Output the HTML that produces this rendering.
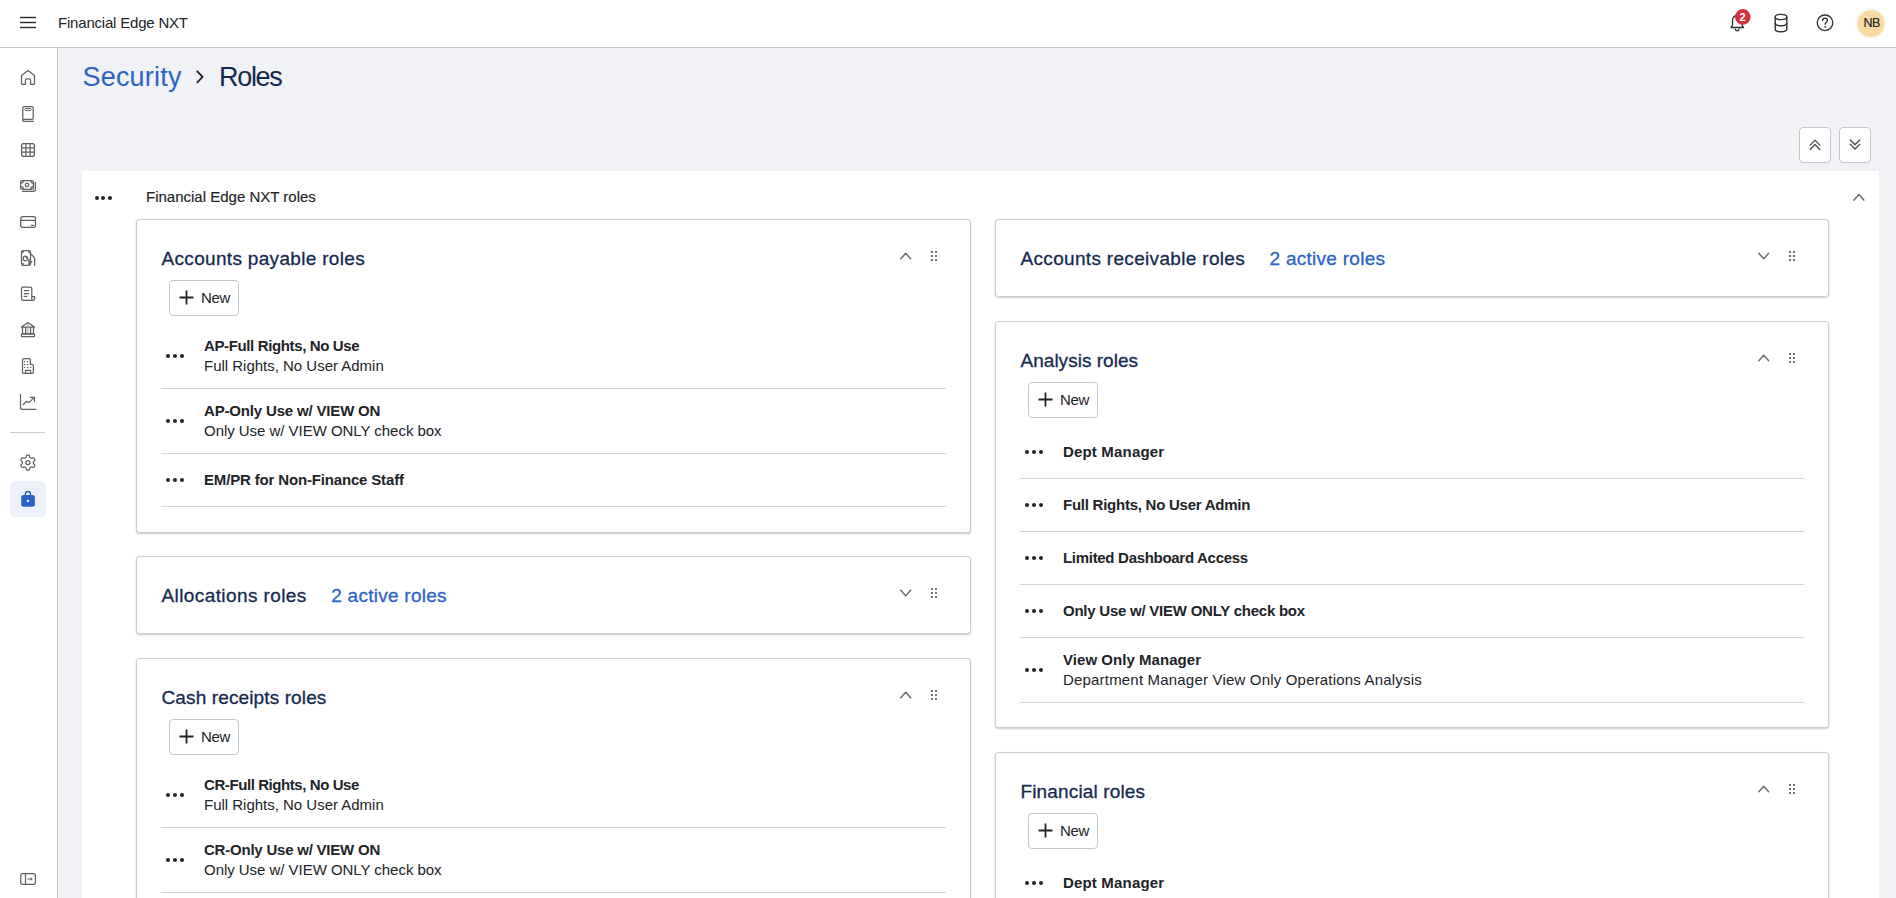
<!DOCTYPE html>
<html><head><meta charset="utf-8">
<style>
*{box-sizing:border-box;margin:0;padding:0}
html,body{width:1896px;height:898px;overflow:hidden}
body{font-family:"Liberation Sans",sans-serif;background:#f0f2f5;color:#212327;position:relative}
.abs{position:absolute}
svg.abs{pointer-events:none}
#hdr{left:0;top:0;width:1896px;height:48px;background:#fff;border-bottom:1px solid #c1c5cc}
#nav{left:0;top:48px;width:58px;height:850px;background:#fff;border-right:1px solid #c1c5cc}
.t{position:absolute;white-space:nowrap;line-height:1}
#sect{left:82px;top:171px;width:1797px;height:727px;background:#fff}
.ecb{width:32px;height:36px;border:1px solid #c2c6cd;border-radius:4px;background:#fff}
.card{position:absolute;background:#fff;border:1px solid #c9ccd2;border-radius:3.5px;box-shadow:0 1px 2px rgba(0,0,0,.22)}
.ttl{color:#152a4e;-webkit-text-stroke:0.3px #152a4e}
.cnt{-webkit-text-stroke:0.3px #2b63c4}
.cnt{color:#2b63c4;margin-left:24.5px}
.btn{position:absolute;width:70px;height:36px;border:1px solid #c2c6cc;border-radius:4px;background:#fff}
.dots{left:0;top:0}
.dots i{position:absolute;border-radius:50%}
.nm{font-weight:bold;color:#212327}
.ds{color:#212327}

</style></head><body>
<div class="abs" id="hdr"></div><div class="abs" id="nav"></div><div class="t " style="left:58.0px;top:15.30px;font-size:15px;color:#212327;letter-spacing:-0.2px">Financial Edge NXT</div><div class="abs" style="left:10px;top:431.8px;width:35px;height:1px;background:#c9ccd1"></div><div class="abs" style="left:10px;top:481px;width:36px;height:36px;border-radius:5px;background:#ecf0f9"></div><div class="t " style="left:82.5px;top:64.14px;font-size:27px;color:#2b64c6;letter-spacing:0.2px">Security</div><div class="t " style="left:219.0px;top:64.14px;font-size:27px;color:#142a4d;letter-spacing:-1.3px">Roles</div><div class="abs ecb" style="left:1799px;top:127px"></div><div class="abs ecb" style="left:1839px;top:127px"></div><div class="abs" id="sect"></div><div class="abs dots"><i style="left:94.50px;top:195.60px;width:4.0px;height:4.0px;background:#212327"></i><i style="left:101.40px;top:195.60px;width:4.0px;height:4.0px;background:#212327"></i><i style="left:108.30px;top:195.60px;width:4.0px;height:4.0px;background:#212327"></i></div><div class="t " style="left:146.0px;top:188.90px;font-size:15px;color:#212327;-webkit-text-stroke:0.15px #212327">Financial Edge NXT roles</div><div class="card" style="left:136px;top:219px;width:835px;height:314px"></div><div class="t ttl" style="left:161.5px;top:249.11px;font-size:19px;"><span style="letter-spacing:0.319px">Accounts payable roles</span></div><div class="btn" style="left:169px;top:280px"></div><div class="t " style="left:201.0px;top:289.80px;font-size:15px;color:#212327;letter-spacing:-0.3px">New</div><div class="abs" style="left:161px;top:388px;width:785px;height:1px;background:#d2d5da"></div><div class="abs dots"><i style="left:166.00px;top:353.90px;width:4.2px;height:4.2px;background:#212327"></i><i style="left:172.80px;top:353.90px;width:4.2px;height:4.2px;background:#212327"></i><i style="left:179.60px;top:353.90px;width:4.2px;height:4.2px;background:#212327"></i></div><div class="t nm" style="left:204.0px;top:337.60px;font-size:15px;letter-spacing:-0.371px">AP-Full Rights, No Use</div><div class="t ds" style="left:204.0px;top:357.70px;font-size:15px;letter-spacing:-0.012px">Full Rights, No User Admin</div><div class="abs" style="left:161px;top:453px;width:785px;height:1px;background:#d2d5da"></div><div class="abs dots"><i style="left:166.00px;top:418.90px;width:4.2px;height:4.2px;background:#212327"></i><i style="left:172.80px;top:418.90px;width:4.2px;height:4.2px;background:#212327"></i><i style="left:179.60px;top:418.90px;width:4.2px;height:4.2px;background:#212327"></i></div><div class="t nm" style="left:204.0px;top:402.60px;font-size:15px;letter-spacing:-0.171px">AP-Only Use w/ VIEW ON</div><div class="t ds" style="left:204.0px;top:422.70px;font-size:15px;letter-spacing:-0.037px">Only Use w/ VIEW ONLY check box</div><div class="abs" style="left:161px;top:506px;width:785px;height:1px;background:#d2d5da"></div><div class="abs dots"><i style="left:166.00px;top:477.70px;width:4.2px;height:4.2px;background:#212327"></i><i style="left:172.80px;top:477.70px;width:4.2px;height:4.2px;background:#212327"></i><i style="left:179.60px;top:477.70px;width:4.2px;height:4.2px;background:#212327"></i></div><div class="t nm" style="left:204.0px;top:472.30px;font-size:15px;letter-spacing:-0.162px">EM/PR for Non-Finance Staff</div><div class="card" style="left:136px;top:556px;width:835px;height:78px"></div><div class="t ttl" style="left:161.5px;top:586.11px;font-size:19px;"><span style="letter-spacing:0.400px">Allocations roles</span><span class="cnt" style="letter-spacing:0.27px">2 active roles</span></div><div class="card" style="left:136px;top:658px;width:835px;height:401px"></div><div class="t ttl" style="left:161.5px;top:688.11px;font-size:19px;"><span style="letter-spacing:0.122px">Cash receipts roles</span></div><div class="btn" style="left:169px;top:719px"></div><div class="t " style="left:201.0px;top:728.80px;font-size:15px;color:#212327;letter-spacing:-0.3px">New</div><div class="abs" style="left:161px;top:827px;width:785px;height:1px;background:#d2d5da"></div><div class="abs dots"><i style="left:166.00px;top:792.90px;width:4.2px;height:4.2px;background:#212327"></i><i style="left:172.80px;top:792.90px;width:4.2px;height:4.2px;background:#212327"></i><i style="left:179.60px;top:792.90px;width:4.2px;height:4.2px;background:#212327"></i></div><div class="t nm" style="left:204.0px;top:776.60px;font-size:15px;letter-spacing:-0.419px">CR-Full Rights, No Use</div><div class="t ds" style="left:204.0px;top:796.70px;font-size:15px;letter-spacing:-0.012px">Full Rights, No User Admin</div><div class="abs" style="left:161px;top:892px;width:785px;height:1px;background:#d2d5da"></div><div class="abs dots"><i style="left:166.00px;top:857.90px;width:4.2px;height:4.2px;background:#212327"></i><i style="left:172.80px;top:857.90px;width:4.2px;height:4.2px;background:#212327"></i><i style="left:179.60px;top:857.90px;width:4.2px;height:4.2px;background:#212327"></i></div><div class="t nm" style="left:204.0px;top:841.60px;font-size:15px;letter-spacing:-0.219px">CR-Only Use w/ VIEW ON</div><div class="t ds" style="left:204.0px;top:861.70px;font-size:15px;letter-spacing:-0.037px">Only Use w/ VIEW ONLY check box</div><div class="abs" style="left:161px;top:945px;width:785px;height:1px;background:#d2d5da"></div><div class="abs dots"><i style="left:166.00px;top:916.70px;width:4.2px;height:4.2px;background:#212327"></i><i style="left:172.80px;top:916.70px;width:4.2px;height:4.2px;background:#212327"></i><i style="left:179.60px;top:916.70px;width:4.2px;height:4.2px;background:#212327"></i></div><div class="t nm" style="left:204.0px;top:911.30px;font-size:15px;letter-spacing:-0.250px">CR-something</div><div class="card" style="left:995px;top:219px;width:834px;height:78px"></div><div class="t ttl" style="left:1020.5px;top:249.11px;font-size:19px;"><span style="letter-spacing:0.321px">Accounts receivable roles</span><span class="cnt" style="letter-spacing:0.27px">2 active roles</span></div><div class="card" style="left:995px;top:321px;width:834px;height:407px"></div><div class="t ttl" style="left:1020.5px;top:351.11px;font-size:19px;"><span style="letter-spacing:0.023px">Analysis roles</span></div><div class="btn" style="left:1028px;top:382px"></div><div class="t " style="left:1060.0px;top:391.80px;font-size:15px;color:#212327;letter-spacing:-0.3px">New</div><div class="abs" style="left:1020px;top:478px;width:784px;height:1px;background:#d2d5da"></div><div class="abs dots"><i style="left:1025.00px;top:449.70px;width:4.2px;height:4.2px;background:#212327"></i><i style="left:1031.80px;top:449.70px;width:4.2px;height:4.2px;background:#212327"></i><i style="left:1038.60px;top:449.70px;width:4.2px;height:4.2px;background:#212327"></i></div><div class="t nm" style="left:1063.0px;top:444.30px;font-size:15px;letter-spacing:0.173px">Dept Manager</div><div class="abs" style="left:1020px;top:531px;width:784px;height:1px;background:#d2d5da"></div><div class="abs dots"><i style="left:1025.00px;top:502.70px;width:4.2px;height:4.2px;background:#212327"></i><i style="left:1031.80px;top:502.70px;width:4.2px;height:4.2px;background:#212327"></i><i style="left:1038.60px;top:502.70px;width:4.2px;height:4.2px;background:#212327"></i></div><div class="t nm" style="left:1063.0px;top:497.30px;font-size:15px;letter-spacing:-0.248px">Full Rights, No User Admin</div><div class="abs" style="left:1020px;top:584px;width:784px;height:1px;background:#d2d5da"></div><div class="abs dots"><i style="left:1025.00px;top:555.70px;width:4.2px;height:4.2px;background:#212327"></i><i style="left:1031.80px;top:555.70px;width:4.2px;height:4.2px;background:#212327"></i><i style="left:1038.60px;top:555.70px;width:4.2px;height:4.2px;background:#212327"></i></div><div class="t nm" style="left:1063.0px;top:550.30px;font-size:15px;letter-spacing:-0.300px">Limited Dashboard Access</div><div class="abs" style="left:1020px;top:637px;width:784px;height:1px;background:#d2d5da"></div><div class="abs dots"><i style="left:1025.00px;top:608.70px;width:4.2px;height:4.2px;background:#212327"></i><i style="left:1031.80px;top:608.70px;width:4.2px;height:4.2px;background:#212327"></i><i style="left:1038.60px;top:608.70px;width:4.2px;height:4.2px;background:#212327"></i></div><div class="t nm" style="left:1063.0px;top:603.30px;font-size:15px;letter-spacing:-0.237px">Only Use w/ VIEW ONLY check box</div><div class="abs" style="left:1020px;top:702px;width:784px;height:1px;background:#d2d5da"></div><div class="abs dots"><i style="left:1025.00px;top:667.90px;width:4.2px;height:4.2px;background:#212327"></i><i style="left:1031.80px;top:667.90px;width:4.2px;height:4.2px;background:#212327"></i><i style="left:1038.60px;top:667.90px;width:4.2px;height:4.2px;background:#212327"></i></div><div class="t nm" style="left:1063.0px;top:651.60px;font-size:15px;letter-spacing:0.044px">View Only Manager</div><div class="t ds" style="left:1063.0px;top:671.70px;font-size:15px;letter-spacing:0.187px">Department Manager View Only Operations Analysis</div><div class="card" style="left:995px;top:752px;width:834px;height:401px"></div><div class="t ttl" style="left:1020.5px;top:782.11px;font-size:19px;"><span style="letter-spacing:0.143px">Financial roles</span></div><div class="btn" style="left:1028px;top:813px"></div><div class="t " style="left:1060.0px;top:822.80px;font-size:15px;color:#212327;letter-spacing:-0.3px">New</div><div class="abs" style="left:1020px;top:909px;width:784px;height:1px;background:#d2d5da"></div><div class="abs dots"><i style="left:1025.00px;top:880.70px;width:4.2px;height:4.2px;background:#212327"></i><i style="left:1031.80px;top:880.70px;width:4.2px;height:4.2px;background:#212327"></i><i style="left:1038.60px;top:880.70px;width:4.2px;height:4.2px;background:#212327"></i></div><div class="t nm" style="left:1063.0px;top:875.30px;font-size:15px;letter-spacing:0.173px">Dept Manager</div><div class="abs" style="left:1020px;top:962px;width:784px;height:1px;background:#d2d5da"></div><div class="abs dots"><i style="left:1025.00px;top:933.70px;width:4.2px;height:4.2px;background:#212327"></i><i style="left:1031.80px;top:933.70px;width:4.2px;height:4.2px;background:#212327"></i><i style="left:1038.60px;top:933.70px;width:4.2px;height:4.2px;background:#212327"></i></div><div class="t nm" style="left:1063.0px;top:928.30px;font-size:15px;letter-spacing:-0.248px">Full Rights, No User Admin</div>
<svg class="abs" style="left:0;top:0" width="1896" height="898" viewBox="0 0 1896 898">
<rect x="20" y="16.80" width="16" height="1.4" fill="#26282c"/><rect x="20" y="21.80" width="16" height="1.4" fill="#26282c"/><rect x="20" y="26.80" width="16" height="1.4" fill="#26282c"/><path d="M1731 27.5 L1743.5 27.5 L1742 25.5 L1742 21 C1742 17.5 1740 15.7 1737.2 15.7 C1734.4 15.7 1732.5 17.5 1732.5 21 L1732.5 25.5 Z" fill="none" stroke="#2d3035" stroke-width="1.3" stroke-linejoin="round"/><path d="M1735.2 28.5 C1735.4 30.3 1736.2 30.8 1737.2 30.8 C1738.2 30.8 1739 30.3 1739.2 28.5" fill="none" stroke="#2d3035" stroke-width="1.3"/><circle cx="1742.8" cy="16.9" r="7.8" fill="#d1323f"/><ellipse cx="1781" cy="17" rx="5.8" ry="2.6" fill="none" stroke="#2d3035" stroke-width="1.4"/><path d="M1775.2 17 L1775.2 29 C1775.2 30.5 1777.8 31.7 1781 31.7 C1784.2 31.7 1786.8 30.5 1786.8 29 L1786.8 17" fill="none" stroke="#2d3035" stroke-width="1.4"/><path d="M1775.2 23 C1775.2 24.5 1777.8 25.7 1781 25.7 C1784.2 25.7 1786.8 24.5 1786.8 23" fill="none" stroke="#2d3035" stroke-width="1.4"/><circle cx="1825" cy="22.8" r="7.8" fill="none" stroke="#2d3035" stroke-width="1.3"/><path d="M1822.6 20.6 C1822.6 19 1823.6 18.2 1825 18.2 C1826.4 18.2 1827.4 19.1 1827.4 20.4 C1827.4 21.9 1825.2 22.2 1825.2 24.3" fill="none" stroke="#2d3035" stroke-width="1.3" stroke-linecap="round"/><circle cx="1825.2" cy="26.8" r="0.9" fill="#2d3035"/><circle cx="1870.9" cy="23.7" r="15.4" fill="#f1f1f3"/><circle cx="1870.9" cy="23.7" r="14.8" fill="#fffdf8"/><circle cx="1870.9" cy="23.7" r="13.6" fill="#f9daa5"/><path d="M21.5 83.6 L21.5 75.6 L28 70.4 L34.5 75.6 L34.5 83.6 C34.5 84.1 34.2 84.4 33.7 84.4 L30.6 84.4 L30.6 80.2 C30.6 79.3 30.1 78.8 29.2 78.8 L26.8 78.8 C25.9 78.8 25.4 79.3 25.4 80.2 L25.4 84.4 L22.3 84.4 C21.8 84.4 21.5 84.1 21.5 83.6 Z" fill="none" stroke="#5f6166" stroke-width="1.25" stroke-linecap="round" stroke-linejoin="round"/><path d="M22.8 120 L22.8 108 C22.8 107.1 23.4 106.6 24.3 106.6 L31.8 106.6 C32.7 106.6 33.2 107.1 33.2 108 L33.2 118.1 C33.2 118.9 32.7 119.4 31.9 119.4 L24.3 119.4 C23.4 119.4 22.8 120 22.8 120.5 C22.8 121 23.3 121.4 24 121.4 L33.4 121.4" fill="none" stroke="#5f6166" stroke-width="1.25" stroke-linecap="round" stroke-linejoin="round"/><rect x="24.8" y="108.5" width="6.4" height="2.1" rx="1.05" fill="none" stroke="#5f6166" stroke-width="1.0"/><rect x="21.6" y="143.6" width="12.8" height="12.8" rx="2" fill="none" stroke="#5f6166" stroke-width="1.25" stroke-linecap="round" stroke-linejoin="round"/><path d="M25.9 143.6 V156.4 M30.1 143.6 V156.4 M21.6 147.9 H34.4 M21.6 152.1 H34.4" fill="none" stroke="#5f6166" stroke-width="1.25" stroke-linecap="round" stroke-linejoin="round"/><rect x="20.6" y="180.5" width="12.8" height="8.8" rx="1.6" fill="none" stroke="#5f6166" stroke-width="1.25" stroke-linecap="round" stroke-linejoin="round"/><path d="M20.6 183.3 A2.8 2.8 0 0 0 23.4 180.5 M30.6 180.5 A2.8 2.8 0 0 0 33.4 183.3 M23.4 189.3 A2.8 2.8 0 0 0 20.6 186.5 M33.4 186.5 A2.8 2.8 0 0 0 30.6 189.3" fill="none" stroke="#5f6166" stroke-width="1.25" stroke-linecap="round" stroke-linejoin="round"/><circle cx="27" cy="184.9" r="1.7" fill="none" stroke="#5f6166" stroke-width="1.25" stroke-linecap="round" stroke-linejoin="round"/><path d="M35.4 182.3 V189.3 C35.4 190.6 34.5 191.4 33.3 191.4 H22.4" fill="none" stroke="#5f6166" stroke-width="1.25" stroke-linecap="round" stroke-linejoin="round"/><rect x="20.7" y="216.5" width="14.8" height="10.8" rx="2" fill="none" stroke="#5f6166" stroke-width="1.25" stroke-linecap="round" stroke-linejoin="round"/><path d="M20.7 220.4 H35.5 M31.4 225.3 H33.4" fill="none" stroke="#5f6166" stroke-width="1.25" stroke-linecap="round" stroke-linejoin="round"/><rect x="21.5" y="250.6" width="9" height="14.7" rx="1.5" fill="none" stroke="#5f6166" stroke-width="1.25" stroke-linecap="round" stroke-linejoin="round"/><circle cx="22.9" cy="252" r="0.75" fill="none" stroke="#5f6166" stroke-width="1"/><circle cx="29.1" cy="252" r="0.75" fill="none" stroke="#5f6166" stroke-width="1"/><circle cx="22.9" cy="263.9" r="0.75" fill="none" stroke="#5f6166" stroke-width="1"/><circle cx="29.1" cy="263.9" r="0.75" fill="none" stroke="#5f6166" stroke-width="1"/><path d="M30.6 253.8 L33.9 257 C34.4 257.5 34.6 258.1 34.6 258.8 L34.6 265.6" fill="none" stroke="#5f6166" stroke-width="1.25" stroke-linecap="round" stroke-linejoin="round"/><path d="M27.6 257.6 C27 256.5 26.3 256.1 25.4 256.1 C24 256.1 23.2 257.2 23.2 258.5 C23.2 259.8 24.1 260.8 25.4 260.8 C26 260.8 26.5 260.6 26.9 260.2" fill="none" stroke="#5f6166" stroke-width="1.25" stroke-linecap="round" stroke-linejoin="round"/><path d="M25.9 257.3 L31.8 262.3 M28.4 261.2 L30.6 264.2" fill="none" stroke="#5f6166" stroke-width="1.25" stroke-linecap="round" stroke-linejoin="round"/><path d="M31.8 296.6 L31.8 288.8 C31.8 287.8 31.2 287.2 30.2 287.2 L23.1 287.2 C22.1 287.2 21.5 287.8 21.5 288.8 L21.5 298.7 C21.5 299.7 22.2 300.4 23.2 300.4 L32.6 300.4 C33.8 300.4 34.6 299.4 34.6 298.2 L34.6 296.6 L31.8 296.6 L31.8 299.4" fill="none" stroke="#5f6166" stroke-width="1.25" stroke-linecap="round" stroke-linejoin="round"/><path d="M24.3 290.5 H28.8 M24.3 293.5 H28.8 M24.3 296.4 H26.8" fill="none" stroke="#5f6166" stroke-width="1.25" stroke-linecap="round" stroke-linejoin="round"/><path d="M21.5 327 L27.8 322.4 L34.5 327 Z" fill="none" stroke="#5f6166" stroke-width="1.25" stroke-linecap="round" stroke-linejoin="round"/><rect x="27.2" y="324.4" width="1.2" height="1.4" fill="#75777c"/><path d="M22.5 327.3 V333.6 M25.6 327.3 V333.6 M30.6 327.3 V333.6 M33.5 327.3 V333.6 M22.5 333.6 H33.5" fill="none" stroke="#5f6166" stroke-width="1.25" stroke-linecap="round" stroke-linejoin="round"/><path d="M27.9 327.6 V333.4" stroke="#9a9ca0" stroke-width="1.1"/><rect x="21.4" y="334.2" width="13.2" height="2.4" rx="0.6" fill="none" stroke="#5f6166" stroke-width="1.25" stroke-linecap="round" stroke-linejoin="round"/><path d="M22.5 372.5 L22.5 359.8 C22.5 359 23 358.5 23.8 358.5 L29 358.5 C29.8 358.5 30.4 359 30.4 359.8 L30.4 364.4 L32.1 364.4 C32.9 364.4 33.4 364.9 33.4 365.7 L33.4 372.3 C33.4 372.9 33 373.3 32.4 373.3 L23.3 373.3 C22.8 373.3 22.5 373 22.5 372.5 Z M25.5 373.3 V370.4 H30.6 V373.3" fill="none" stroke="#5f6166" stroke-width="1.25" stroke-linecap="round" stroke-linejoin="round"/><circle cx="24.7" cy="361.6" r="0.75" fill="#5f6166"/><circle cx="27.6" cy="361.6" r="0.75" fill="#5f6166"/><circle cx="24.7" cy="364.6" r="0.75" fill="#5f6166"/><circle cx="27.6" cy="364.6" r="0.75" fill="#5f6166"/><circle cx="24.7" cy="367.6" r="0.75" fill="#5f6166"/><circle cx="27.6" cy="367.6" r="0.75" fill="#5f6166"/><circle cx="30.7" cy="367.6" r="0.75" fill="#5f6166"/><path d="M20.5 394.4 V408 C20.5 408.9 21.1 409.4 22 409.4 H35.8 M23.3 404.5 L26.6 401.3 L29 402.6 L34.3 397.4 M30.3 397.3 H34.5 V401.5" fill="none" stroke="#5f6166" stroke-width="1.25" stroke-linecap="round" stroke-linejoin="round"/><path d="M33.40 462.60 L33.40 462.74 L33.40 462.89 L33.40 463.03 L33.40 463.18 L33.42 463.33 L33.46 463.48 L33.54 463.64 L33.68 463.83 L33.92 464.05 L34.23 464.30 L34.52 464.56 L34.73 464.82 L34.85 465.06 L34.88 465.28 L34.86 465.48 L34.81 465.68 L34.75 465.87 L34.67 466.05 L34.58 466.23 L34.48 466.40 L34.38 466.57 L34.27 466.74 L34.15 466.90 L34.02 467.05 L33.88 467.19 L33.71 467.30 L33.50 467.39 L33.24 467.41 L32.91 467.35 L32.53 467.23 L32.16 467.09 L31.86 466.99 L31.62 466.96 L31.44 466.97 L31.29 467.02 L31.15 467.08 L31.02 467.15 L30.90 467.22 L30.77 467.29 L30.65 467.36 L30.53 467.43 L30.40 467.51 L30.27 467.58 L30.15 467.66 L30.03 467.74 L29.92 467.85 L29.81 468.00 L29.73 468.22 L29.66 468.54 L29.60 468.93 L29.51 469.32 L29.39 469.63 L29.24 469.85 L29.07 469.98 L28.88 470.07 L28.69 470.13 L28.50 470.16 L28.30 470.18 L28.10 470.20 L27.90 470.20 L27.70 470.20 L27.50 470.18 L27.30 470.16 L27.11 470.13 L26.92 470.07 L26.73 469.98 L26.56 469.85 L26.41 469.63 L26.29 469.32 L26.20 468.93 L26.14 468.54 L26.07 468.22 L25.99 468.00 L25.88 467.85 L25.77 467.74 L25.65 467.66 L25.53 467.58 L25.40 467.51 L25.27 467.43 L25.15 467.36 L25.03 467.29 L24.90 467.22 L24.78 467.15 L24.65 467.08 L24.51 467.02 L24.36 466.97 L24.18 466.96 L23.94 466.99 L23.64 467.09 L23.27 467.23 L22.89 467.35 L22.56 467.41 L22.30 467.39 L22.09 467.30 L21.92 467.19 L21.78 467.05 L21.65 466.90 L21.53 466.74 L21.42 466.57 L21.32 466.40 L21.22 466.23 L21.13 466.05 L21.05 465.87 L20.99 465.68 L20.94 465.48 L20.92 465.28 L20.95 465.06 L21.07 464.82 L21.28 464.56 L21.57 464.30 L21.88 464.05 L22.12 463.83 L22.26 463.64 L22.34 463.48 L22.38 463.33 L22.40 463.18 L22.40 463.03 L22.40 462.89 L22.40 462.74 L22.40 462.60 L22.40 462.46 L22.40 462.31 L22.40 462.17 L22.40 462.02 L22.38 461.87 L22.34 461.72 L22.26 461.56 L22.12 461.37 L21.88 461.15 L21.57 460.90 L21.28 460.64 L21.07 460.38 L20.95 460.14 L20.92 459.92 L20.94 459.72 L20.99 459.52 L21.05 459.33 L21.13 459.15 L21.22 458.97 L21.32 458.80 L21.42 458.63 L21.53 458.46 L21.65 458.30 L21.78 458.15 L21.92 458.01 L22.09 457.90 L22.30 457.81 L22.56 457.79 L22.89 457.85 L23.27 457.97 L23.64 458.11 L23.94 458.21 L24.18 458.24 L24.36 458.23 L24.51 458.18 L24.65 458.12 L24.78 458.05 L24.90 457.98 L25.03 457.91 L25.15 457.84 L25.27 457.77 L25.40 457.69 L25.53 457.62 L25.65 457.54 L25.77 457.46 L25.88 457.35 L25.99 457.20 L26.07 456.98 L26.14 456.66 L26.20 456.27 L26.29 455.88 L26.41 455.57 L26.56 455.35 L26.73 455.22 L26.92 455.13 L27.11 455.07 L27.30 455.04 L27.50 455.02 L27.70 455.00 L27.90 455.00 L28.10 455.00 L28.30 455.02 L28.50 455.04 L28.69 455.07 L28.88 455.13 L29.07 455.22 L29.24 455.35 L29.39 455.57 L29.51 455.88 L29.60 456.27 L29.66 456.66 L29.73 456.98 L29.81 457.20 L29.92 457.35 L30.03 457.46 L30.15 457.54 L30.27 457.62 L30.40 457.69 L30.53 457.77 L30.65 457.84 L30.77 457.91 L30.90 457.98 L31.02 458.05 L31.15 458.12 L31.29 458.18 L31.44 458.23 L31.62 458.24 L31.86 458.21 L32.16 458.11 L32.53 457.97 L32.91 457.85 L33.24 457.79 L33.50 457.81 L33.71 457.90 L33.88 458.01 L34.02 458.15 L34.15 458.30 L34.27 458.46 L34.38 458.63 L34.48 458.80 L34.58 458.97 L34.67 459.15 L34.75 459.33 L34.81 459.52 L34.86 459.72 L34.88 459.92 L34.85 460.14 L34.73 460.38 L34.52 460.64 L34.23 460.90 L33.92 461.15 L33.68 461.37 L33.54 461.56 L33.46 461.72 L33.42 461.87 L33.40 462.02 L33.40 462.17 L33.40 462.31 L33.40 462.46 Z" fill="none" stroke="#5f6166" stroke-width="1.25" stroke-linecap="round" stroke-linejoin="round"/><circle cx="27.9" cy="462.6" r="2.05" fill="none" stroke="#5f6166" stroke-width="1.25" stroke-linecap="round" stroke-linejoin="round"/><path d="M25.4 495.5 V494 C25.4 492.4 26.5 491.5 27.95 491.5 C29.4 491.5 30.5 492.4 30.5 494 V495.5" fill="none" stroke="#2a5fc2" stroke-width="1.4"/><rect x="21.2" y="495" width="13.7" height="11.8" rx="2.4" fill="#2a63c7"/><rect x="26.8" y="499.8" width="2.2" height="2.2" fill="#ecf0f9"/><rect x="20.8" y="873.6" width="14.6" height="10.8" rx="1.6" fill="none" stroke="#5f6166" stroke-width="1.25" stroke-linecap="round" stroke-linejoin="round"/><path d="M25.5 873.6 V884.4" fill="none" stroke="#5f6166" stroke-width="1.25" stroke-linecap="round" stroke-linejoin="round"/><path d="M27.4 879 H31.2" stroke="#8a8c90" stroke-width="1.4"/><path d="M30.6 877 L32.8 879 L30.6 881 Z" fill="#6a6c70"/><path d="M197.3 71.3 L202.6 76.8 L197.3 82.3" fill="none" stroke="#1b1f2a" stroke-width="1.8" stroke-linecap="round" stroke-linejoin="round"/><path d="M1810.20 145.10 L1815.00 140.10 L1819.80 145.10" fill="none" stroke="#4a4c51" stroke-width="1.3" stroke-linecap="round" stroke-linejoin="round"/><path d="M1810.20 149.50 L1815.00 144.50 L1819.80 149.50" fill="none" stroke="#4a4c51" stroke-width="1.3" stroke-linecap="round" stroke-linejoin="round"/><path d="M1850.20 140.00 L1855.00 144.80 L1859.80 140.00" fill="none" stroke="#4a4c51" stroke-width="1.3" stroke-linecap="round" stroke-linejoin="round"/><path d="M1850.20 144.20 L1855.00 149.00 L1859.80 144.20" fill="none" stroke="#4a4c51" stroke-width="1.3" stroke-linecap="round" stroke-linejoin="round"/><path d="M1854.00 200.10 L1858.90 194.50 L1863.80 200.10" fill="none" stroke="#6b6d72" stroke-width="1.5" stroke-linecap="round" stroke-linejoin="round"/><path d="M900.75 258.80 L905.70 253.30 L910.65 258.80" fill="none" stroke="#6b6d72" stroke-width="1.5" stroke-linecap="round" stroke-linejoin="round"/><rect x="931.00" y="251.00" width="2" height="2" fill="#737579"/><rect x="931.00" y="255.00" width="2" height="2" fill="#737579"/><rect x="931.00" y="259.00" width="2" height="2" fill="#737579"/><rect x="935.00" y="251.00" width="2" height="2" fill="#737579"/><rect x="935.00" y="255.00" width="2" height="2" fill="#737579"/><rect x="935.00" y="259.00" width="2" height="2" fill="#737579"/><path d="M186.5 290.5 V304.5 M179.5 297.5 H193.5" stroke="#212327" stroke-width="1.8"/><path d="M900.75 590.30 L905.70 595.80 L910.65 590.30" fill="none" stroke="#6b6d72" stroke-width="1.5" stroke-linecap="round" stroke-linejoin="round"/><rect x="931.00" y="588.00" width="2" height="2" fill="#737579"/><rect x="931.00" y="592.00" width="2" height="2" fill="#737579"/><rect x="931.00" y="596.00" width="2" height="2" fill="#737579"/><rect x="935.00" y="588.00" width="2" height="2" fill="#737579"/><rect x="935.00" y="592.00" width="2" height="2" fill="#737579"/><rect x="935.00" y="596.00" width="2" height="2" fill="#737579"/><path d="M900.75 697.80 L905.70 692.30 L910.65 697.80" fill="none" stroke="#6b6d72" stroke-width="1.5" stroke-linecap="round" stroke-linejoin="round"/><rect x="931.00" y="690.00" width="2" height="2" fill="#737579"/><rect x="931.00" y="694.00" width="2" height="2" fill="#737579"/><rect x="931.00" y="698.00" width="2" height="2" fill="#737579"/><rect x="935.00" y="690.00" width="2" height="2" fill="#737579"/><rect x="935.00" y="694.00" width="2" height="2" fill="#737579"/><rect x="935.00" y="698.00" width="2" height="2" fill="#737579"/><path d="M186.5 729.5 V743.5 M179.5 736.5 H193.5" stroke="#212327" stroke-width="1.8"/><path d="M1758.75 253.30 L1763.70 258.80 L1768.65 253.30" fill="none" stroke="#6b6d72" stroke-width="1.5" stroke-linecap="round" stroke-linejoin="round"/><rect x="1789.00" y="251.00" width="2" height="2" fill="#737579"/><rect x="1789.00" y="255.00" width="2" height="2" fill="#737579"/><rect x="1789.00" y="259.00" width="2" height="2" fill="#737579"/><rect x="1793.00" y="251.00" width="2" height="2" fill="#737579"/><rect x="1793.00" y="255.00" width="2" height="2" fill="#737579"/><rect x="1793.00" y="259.00" width="2" height="2" fill="#737579"/><path d="M1758.75 360.80 L1763.70 355.30 L1768.65 360.80" fill="none" stroke="#6b6d72" stroke-width="1.5" stroke-linecap="round" stroke-linejoin="round"/><rect x="1789.00" y="353.00" width="2" height="2" fill="#737579"/><rect x="1789.00" y="357.00" width="2" height="2" fill="#737579"/><rect x="1789.00" y="361.00" width="2" height="2" fill="#737579"/><rect x="1793.00" y="353.00" width="2" height="2" fill="#737579"/><rect x="1793.00" y="357.00" width="2" height="2" fill="#737579"/><rect x="1793.00" y="361.00" width="2" height="2" fill="#737579"/><path d="M1045.5 392.5 V406.5 M1038.5 399.5 H1052.5" stroke="#212327" stroke-width="1.8"/><path d="M1758.75 791.80 L1763.70 786.30 L1768.65 791.80" fill="none" stroke="#6b6d72" stroke-width="1.5" stroke-linecap="round" stroke-linejoin="round"/><rect x="1789.00" y="784.00" width="2" height="2" fill="#737579"/><rect x="1789.00" y="788.00" width="2" height="2" fill="#737579"/><rect x="1789.00" y="792.00" width="2" height="2" fill="#737579"/><rect x="1793.00" y="784.00" width="2" height="2" fill="#737579"/><rect x="1793.00" y="788.00" width="2" height="2" fill="#737579"/><rect x="1793.00" y="792.00" width="2" height="2" fill="#737579"/><path d="M1045.5 823.5 V837.5 M1038.5 830.5 H1052.5" stroke="#212327" stroke-width="1.8"/>
</svg>
<div class="t " style="left:1739.6px;top:11.89px;font-size:11px;color:#fff;font-weight:bold">2</div><div class="t " style="left:1863.4px;top:16.82px;font-size:12.5px;color:#222326;letter-spacing:-0.3px;-webkit-text-stroke:0.2px #222326">NB</div>
</body></html>
